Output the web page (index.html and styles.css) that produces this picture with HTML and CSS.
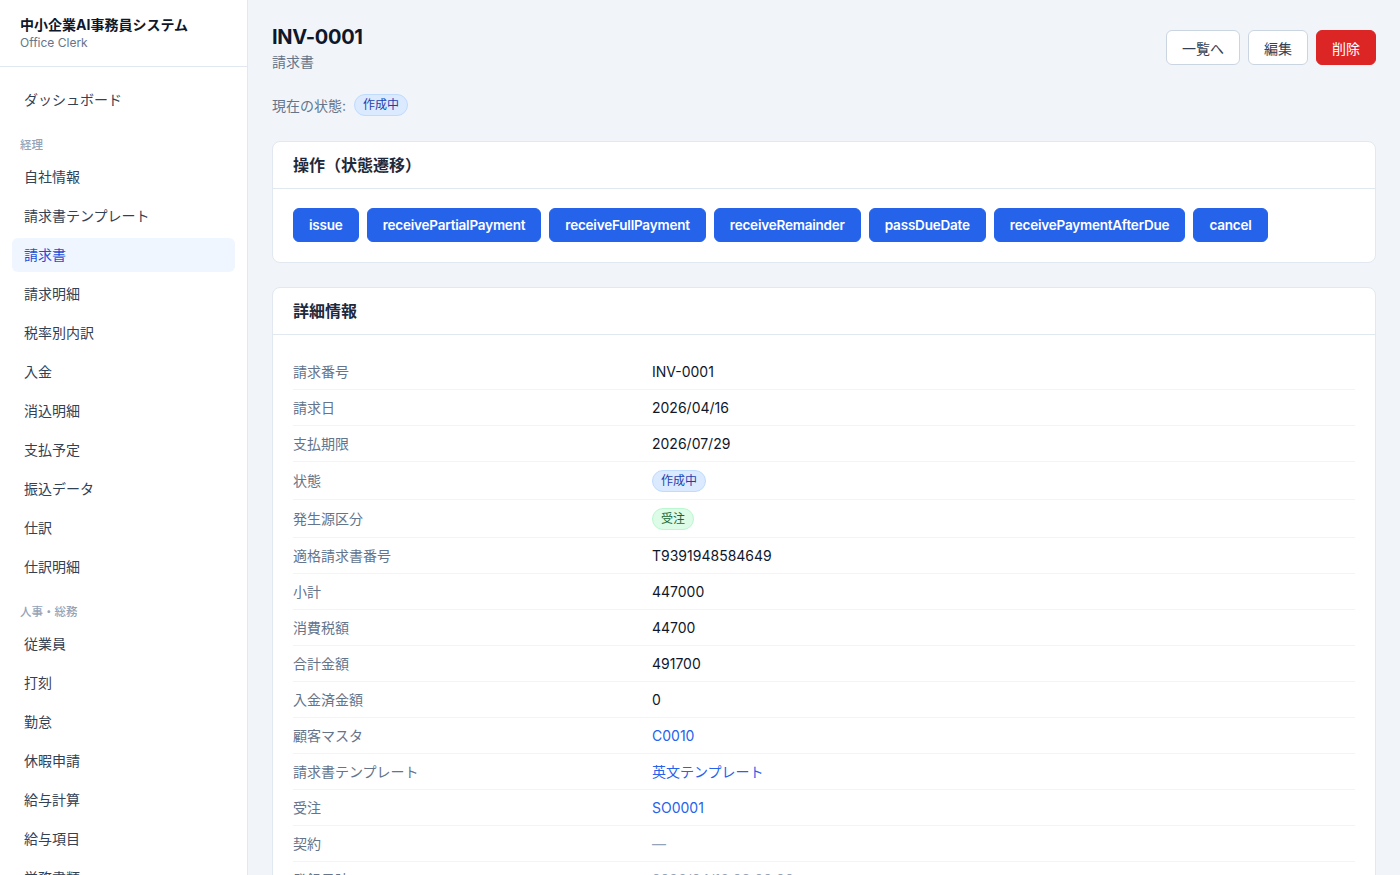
FILE: index.html
```html
<!DOCTYPE html>
<html lang="ja">
<head>
  <meta charset="UTF-8" />
  <meta name="viewport" content="width=device-width, initial-scale=1.0"/>
  <title>INV-0001 - 中小企業AI事務員システム</title>
  <link rel="stylesheet" href="styles.css">
</head>

<body>
  <aside class="sidebar">
    <div class="brand">
      <div class="brand-title">中小企業AI事務員システム</div>
      <div class="brand-sub">Office Clerk</div>
    </div>

    <nav class="nav">
      <a class="nav-item" href="#">ダッシュボード</a>

      <div class="nav-section">経理</div>
      <a class="nav-item" href="#">自社情報</a>
      <a class="nav-item" href="#">請求書テンプレート</a>
      <a class="nav-item active" href="#">請求書</a>
      <a class="nav-item" href="#">請求明細</a>
      <a class="nav-item" href="#">税率別内訳</a>
      <a class="nav-item" href="#">入金</a>
      <a class="nav-item" href="#">消込明細</a>
      <a class="nav-item" href="#">支払予定</a>
      <a class="nav-item" href="#">振込データ</a>
      <a class="nav-item" href="#">仕訳</a>
      <a class="nav-item" href="#">仕訳明細</a>

      <div class="nav-section">人事・総務</div>
      <a class="nav-item" href="#">従業員</a>
      <a class="nav-item" href="#">打刻</a>
      <a class="nav-item" href="#">勤怠</a>
      <a class="nav-item" href="#">休暇申請</a>
      <a class="nav-item" href="#">給与計算</a>
      <a class="nav-item" href="#">給与項目</a>
      <a class="nav-item" href="#">労務書類</a>
    </nav>
  </aside>

  <main class="main">
    <div class="page-head">
      <div>
        <h1 class="page-title">INV-0001</h1>
        <div class="page-sub">請求書</div>
      </div>
      <div class="head-actions">
        <button class="btn btn-outline">一覧へ</button>
        <button class="btn btn-outline">編集</button>
        <button class="btn btn-danger">削除</button>
      </div>
    </div>

    <div class="status-line">
      <span>現在の状態:</span>
      <span class="badge badge-blue">作成中</span>
    </div>

    <section class="card">
      <div class="card-head">操作（状態遷移）</div>
      <div class="card-body actions">
        <button class="btn btn-primary">issue</button>
        <button class="btn btn-primary">receivePartialPayment</button>
        <button class="btn btn-primary">receiveFullPayment</button>
        <button class="btn btn-primary">receiveRemainder</button>
        <button class="btn btn-primary">passDueDate</button>
        <button class="btn btn-primary">receivePaymentAfterDue</button>
        <button class="btn btn-primary">cancel</button>
      </div>
    </section>

    <section class="card">
      <div class="card-head">詳細情報</div>
      <div class="card-body detail">
        <div class="row"><div class="label">請求番号</div><div class="value">INV-0001</div></div>
        <div class="row"><div class="label">請求日</div><div class="value">2026/04/16</div></div>
        <div class="row"><div class="label">支払期限</div><div class="value">2026/07/29</div></div>
        <div class="row"><div class="label">状態</div><div class="value"><span class="badge badge-blue">作成中</span></div></div>
        <div class="row"><div class="label">発生源区分</div><div class="value"><span class="badge badge-green">受注</span></div></div>
        <div class="row"><div class="label">適格請求書番号</div><div class="value">T9391948584649</div></div>
        <div class="row"><div class="label">小計</div><div class="value">447000</div></div>
        <div class="row"><div class="label">消費税額</div><div class="value">44700</div></div>
        <div class="row"><div class="label">合計金額</div><div class="value">491700</div></div>
        <div class="row"><div class="label">入金済金額</div><div class="value">0</div></div>
        <div class="row"><div class="label">顧客マスタ</div><div class="value"><a href="#">C0010</a></div></div>
        <div class="row"><div class="label">請求書テンプレート</div><div class="value"><a href="#">英文テンプレート</a></div></div>
        <div class="row"><div class="label">受注</div><div class="value"><a href="#">SO0001</a></div></div>
        <div class="row"><div class="label">契約</div><div class="value muted">—</div></div>
        <div class="row"><div class="label">登録日時</div><div class="value muted">2026/04/16 09:00:00</div></div>
        <div class="row"><div class="label">更新日時</div><div class="value muted">2026/04/16 09:00:00</div></div>
      </div>
    </section>
  </main>
</body>
</html>
```

FILE: styles.css
```css
body {
  margin: 0;
  font-family: 'Inter', 'Noto Sans CJK JP', sans-serif;
  background-color: #f1f5f9;
  color: #1e293b;
  display: flex;
  align-items: flex-start;
}
a {
  text-decoration: none;
}

/* サイドバー */
.sidebar {
  width: 248px;
  flex-shrink: 0;
  min-height: 100vh;
  background: #fff;
  border-right: 1px solid #e2e8f0;
  box-sizing: border-box;
}
.brand {
  padding: 16px 20px 15px;
  border-bottom: 1px solid #e2e8f0;
}
.brand-title {
  font-size: 14px;
  font-weight: bold;
  line-height: 18px;
  color: #0f172a;
}
.brand-sub {
  font-size: 12px;
  line-height: 17px;
  color: #64748b;
}
.nav {
  padding: 16px 12px;
  display: flex;
  flex-direction: column;
}
.nav-item {
  display: block;
  padding: 8px 12px;
  line-height: 18px;
  font-size: 14px;
  color: #334155;
  border-radius: 6px;
  margin-bottom: 5px;
}
.nav-item.active {
  background: #eff6ff;
  color: #1d4ed8;
}
.nav-section {
  margin: 15px 0 7px 8px;
  font-size: 11.5px;
  line-height: 16px;
  font-weight: 500;
  color: #94a3b8;
}

/* メイン */
.main {
  flex: 1;
  padding: 24px 24px 40px;
  min-width: 0;
}
.page-head {
  display: flex;
  justify-content: space-between;
  align-items: flex-start;
}
.page-title {
  margin: 0;
  font-size: 20px;
  line-height: 26px;
  font-weight: bold;
  color: #0f172a;
  letter-spacing: -0.3px;
}
.page-sub {
  font-size: 14px;
  line-height: 20px;
  color: #64748b;
  margin-top: 2px;
}
.head-actions {
  display: flex;
  gap: 8px;
  margin-top: 6px;
}
.btn {
  font-family: inherit;
  font-size: 14px;
  height: 35px;
  padding: 0 15px;
  border-radius: 6px;
  cursor: pointer;
}
.btn-outline {
  background: #fff;
  border: 1px solid #cbd5e1;
  color: #334155;
}
.btn-danger {
  background: #dc2626;
  border: 1px solid #dc2626;
  color: #fff;
}
.btn-primary {
  background: #2563eb;
  border: 1px solid #2563eb;
  color: #fff;
  font-size: 13.5px;
  font-weight: 600;
  letter-spacing: -0.2px;
  height: 34px;
  padding: 0 15px;
}

.status-line {
  display: flex;
  align-items: center;
  gap: 8px;
  margin: 22px 0 25px;
  font-size: 14px;
  color: #64748b;
}
.badge {
  display: inline-block;
  font-size: 12px;
  line-height: 18px;
  padding: 1px 8px;
  border-radius: 999px;
  border: 1px solid;
}
.badge-blue {
  background: #dbeafe;
  border-color: #bfdbfe;
  color: #1e40af;
}
.badge-green {
  background: #dcfce7;
  border-color: #bbf7d0;
  color: #166534;
}

/* カード */
.card {
  background: #fff;
  border: 1px solid #e2e8f0;
  border-radius: 8px;
  margin-bottom: 24px;
}
.card-head {
  padding: 12px 20px;
  font-size: 16px;
  line-height: 22px;
  font-weight: bold;
  color: #1e293b;
  border-bottom: 1px solid #e2e8f0;
}
.card-body {
  padding: 19px 20px 20px;
}
.actions {
  display: flex;
  flex-wrap: wrap;
  gap: 8px;
}
.detail .row {
  display: grid;
  grid-template-columns: 359px 1fr;
  padding: 8px 0 7px;
  border-bottom: 1px solid #f1f5f9;
  font-size: 14px;
  line-height: 20px;
  align-items: center;
}
.detail .label {
  color: #64748b;
}
.detail .value {
  color: #0f172a;
}
.detail .value a {
  color: #2563eb;
}
.detail .value.muted {
  color: #94a3b8;
}
```
